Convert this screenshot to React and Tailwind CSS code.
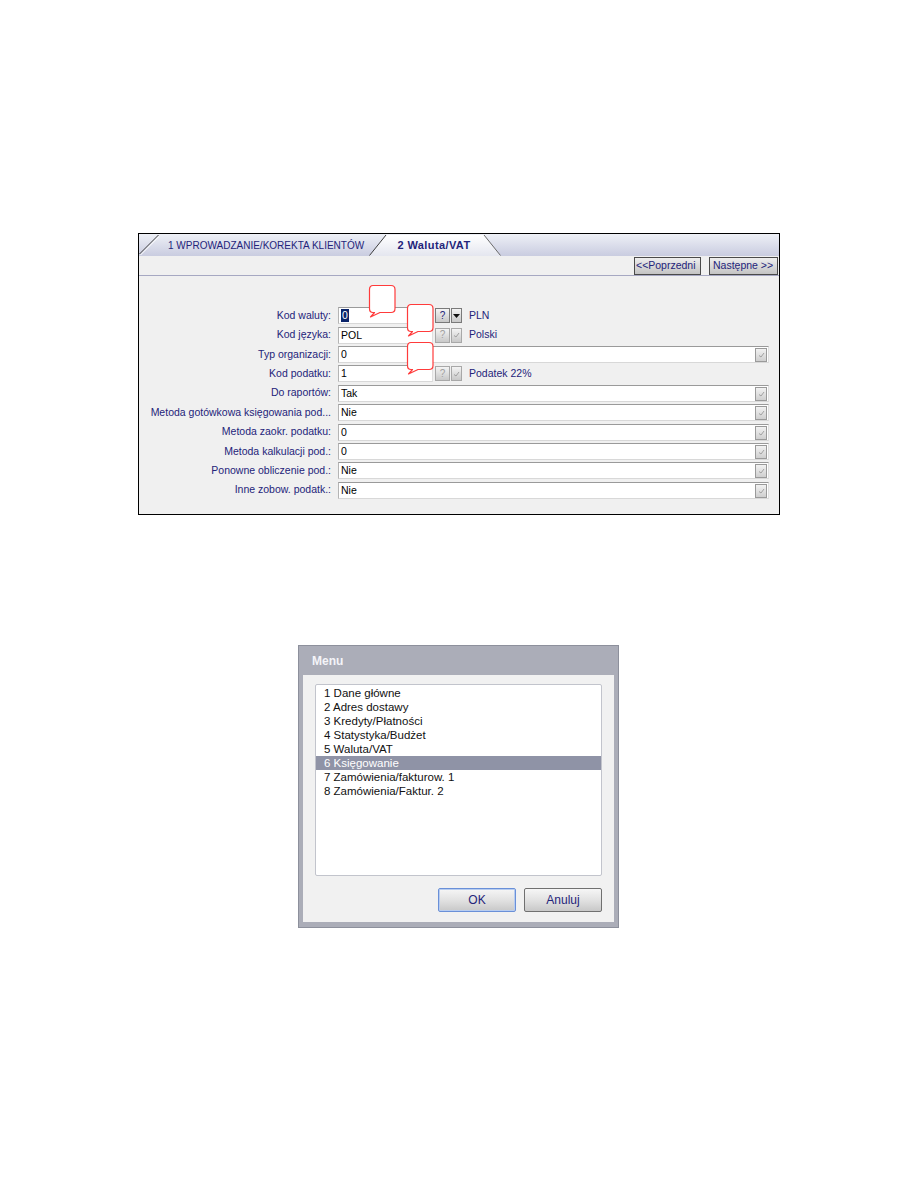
import React from "react";

const font = { fontFamily: '"Liberation Sans", Arial, sans-serif' };

function Callout({ cls }) {
  return (
    <svg className={`absolute ${cls}`} width="29" height="35" viewBox="0 0 29 35">
      <path
        d="M5 1.5 H23 Q27 1.5 27 5.5 V24.5 Q27 28.5 23 28.5 H12 L2.5 33 L6.5 28.5 H5 Q1.5 28.5 1.5 24.5 V5.5 Q1.5 1.5 5 1.5 Z"
        fill="white"
        stroke="#ff3b3b"
        strokeWidth="1.2"
        strokeLinejoin="round"
      />
    </svg>
  );
}

function SmallBtn({ children, active }) {
  return (
    <div
      className={`flex h-[15px] items-center justify-center border ${
        active ? "border-[#7a7a7a]" : "border-[#a8a8a8]"
      } bg-gradient-to-b from-[#f4f4f4] to-[#c8c8c8]`}
    >
      {children}
    </div>
  );
}

function DropArrow({ active }) {
  if (active) {
    return (
      <svg width="7" height="4" viewBox="0 0 7 4">
        <path d="M0 0 H7 L3.5 4 Z" fill="#111" />
      </svg>
    );
  }
  return (
    <svg width="7" height="6" viewBox="0 0 7 6">
      <path d="M1 3.5 L3 5 L6 1" fill="none" stroke="#a0a0a0" strokeWidth="1" />
    </svg>
  );
}

function Input({ value, full, selected }) {
  return (
    <div
      className={`relative flex h-[17px] items-center border border-t-[#9a9a9a] border-l-[#b4b4b4] border-r-[#e0e0e0] border-b-[#d8d8d8] bg-white pl-[2px] text-[10.5px] text-black ${
        full ? "w-[431px]" : "w-[95px]"
      }`}
    >
      {selected ? (
        <span className="bg-[#0a246a] px-[1px] leading-[13px] text-white">{value}</span>
      ) : (
        <span className="leading-[13px]">{value}</span>
      )}
      {full && (
        <div className="absolute right-[1px] top-[1px] flex h-[14px] w-[12px] items-center justify-center border border-[#9a9a9a] bg-gradient-to-b from-[#f2f2f2] to-[#cfcfcf]">
          <DropArrow />
        </div>
      )}
    </div>
  );
}

const rows = [
  { label: "Kod waluty:", value: "0", short: true, active: true, desc: "PLN", selected: true },
  { label: "Kod języka:", value: "POL", short: true, desc: "Polski" },
  { label: "Typ organizacji:", value: "0" },
  { label: "Kod podatku:", value: "1", short: true, desc: "Podatek 22%" },
  { label: "Do raportów:", value: "Tak" },
  { label: "Metoda gotówkowa księgowania pod...", value: "Nie" },
  { label: "Metoda zaokr. podatku:", value: "0" },
  { label: "Metoda kalkulacji pod.:", value: "0" },
  { label: "Ponowne obliczenie pod.:", value: "Nie" },
  { label: "Inne zobow. podatk.:", value: "Nie" },
];

const menuItems = [
  "1 Dane główne",
  "2 Adres dostawy",
  "3 Kredyty/Płatności",
  "4 Statystyka/Budżet",
  "5 Waluta/VAT",
  "6 Księgowanie",
  "7 Zamówienia/fakturow. 1",
  "8 Zamówienia/Faktur. 2",
];

export default function App() {
  return (
    <div className="min-h-[1188px] w-[918px] bg-white" style={font}>
      <div className="pl-[138px] pt-[233px]">
        {/* Top panel */}
        <div className="relative flex h-[282px] w-[642px] flex-col border border-black bg-[#f0f0f0]">
          {/* Tab strip */}
          <div className="flex h-[22px] items-stretch bg-gradient-to-b from-[#eef0f6] to-[#c9cce0]">
            <svg width="20" height="22" viewBox="0 0 20 22" className="shrink-0">
              <path d="M0.5 20 L19.5 1" stroke="#3c3c3c" strokeWidth="1" />
              <path d="M1.5 21 L20 2.5" stroke="#ffffff" strokeWidth="1" />
            </svg>
            <div className="flex w-[210px] items-center whitespace-nowrap pl-[9px] text-[10px] text-[#24247a]">
              1 WPROWADZANIE/KOREKTA KLIENTÓW
            </div>
            <div className="relative flex w-[132px] items-center justify-center text-[11px] font-bold text-[#24247a]">
              <svg className="absolute inset-0" width="132" height="22" viewBox="0 0 132 22">
                <defs>
                  <linearGradient id="tabg" x1="0" y1="0" x2="0" y2="1">
                    <stop offset="0" stopColor="#ffffff" />
                    <stop offset="1" stopColor="#e4e6ef" />
                  </linearGradient>
                </defs>
                <path d="M0 22 L17 1 H115 L132 22 Z" fill="url(#tabg)" />
                <path d="M0.5 21.5 L17 1" stroke="#3c3c3c" strokeWidth="1" fill="none" />
                <path d="M115 1 L131.5 21.5" stroke="#6a6a6a" strokeWidth="1" fill="none" />
              </svg>
              <span className="relative pr-[2px] tracking-[0.4px]">2 Waluta/VAT</span>
            </div>
            <div className="flex-1" />
          </div>
          {/* Toolbar */}
          <div className="flex h-[20px] items-start justify-end gap-[8px] border-b border-[#a6a8c2] pr-[1px] pt-[1px]">
            <div className="flex h-[18px] w-[67px] items-center overflow-hidden whitespace-nowrap border border-[#4a4a4a] bg-gradient-to-b from-[#eeeeee] to-[#c4c4c4] pl-[1px] text-[10.5px] text-[#24247a]">
              &lt;&lt;Poprzedni
            </div>
            <div className="flex h-[18px] w-[69px] items-center overflow-hidden whitespace-nowrap border border-[#4a4a4a] bg-gradient-to-b from-[#eeeeee] to-[#c4c4c4] pl-[3px] text-[10.5px] text-[#24247a]">
              Następne &gt;&gt;
            </div>
          </div>
          {/* Form */}
          <div className="grid auto-rows-[19.4px] pt-[30px]">
            {rows.map((r, i) => (
              <div key={i} className="flex items-center">
                <div className="w-[199px] shrink-0 whitespace-nowrap pr-[7px] text-right text-[10.5px] text-[#24247a]">
                  {r.label}
                </div>
                <Input value={r.value} full={!r.short} selected={r.selected} />
                {r.short && (
                  <div className="ml-[2px] flex items-center gap-[1px]">
                    <div className="w-[15px]">
                      <SmallBtn active={r.active}>
                        <span className={`text-[10px] leading-none ${r.active ? "text-[#24247a]" : "text-[#a0a0a0]"}`}>?</span>
                      </SmallBtn>
                    </div>
                    <div className="w-[11px]">
                      <SmallBtn active={r.active}>
                        <DropArrow active={r.active} />
                      </SmallBtn>
                    </div>
                    <span className="ml-[6px] text-[10.5px] text-[#24247a]">{r.desc}</span>
                  </div>
                )}
              </div>
            ))}
          </div>
          <Callout cls="left-[229px] top-[50px]" />
          <Callout cls="left-[267px] top-[69px]" />
          <Callout cls="left-[267px] top-[107px]" />
        </div>

        {/* Menu dialog */}
        <div className="ml-[160px] mt-[130px] flex h-[283px] w-[321px] flex-col border border-[#8d909c] bg-[#abadb8]">
          <div className="flex h-[29px] items-center pl-[13px] text-[12px] font-bold text-[#f4f4f8]">
            Menu
          </div>
          <div className="mx-[4px] mb-[5px] flex flex-1 flex-col bg-[#f1f1f1] px-[12px] pt-[9px]">
            <div className="h-[192px] w-[287px] rounded-[2px] border border-[#c2c4cc] bg-white pt-[1px]">
              {menuItems.map((m, i) => (
                <div
                  key={i}
                  className={`h-[14px] pl-[8px] text-[11.5px] leading-[14px] ${
                    i === 5 ? "bg-[#8f93a6] text-white" : "text-[#111]"
                  }`}
                >
                  {m}
                </div>
              ))}
            </div>
            <div className="mt-[12px] flex justify-end gap-[8px] pr-[0px]">
              <div className="flex h-[24px] w-[78px] items-center justify-center rounded-[2px] border border-[#6a90d8] bg-gradient-to-b from-[#f6f6f6] via-[#e2e2e2] to-[#c8c8c8] text-[12px] text-[#24247a] shadow-[inset_0_0_0_1px_#b8cdf0]">
                OK
              </div>
              <div className="flex h-[24px] w-[78px] items-center justify-center rounded-[2px] border border-[#707070] bg-gradient-to-b from-[#f6f6f6] via-[#e2e2e2] to-[#c8c8c8] text-[12px] text-[#24247a]">
                Anuluj
              </div>
            </div>
          </div>
        </div>
      </div>
    </div>
  );
}
